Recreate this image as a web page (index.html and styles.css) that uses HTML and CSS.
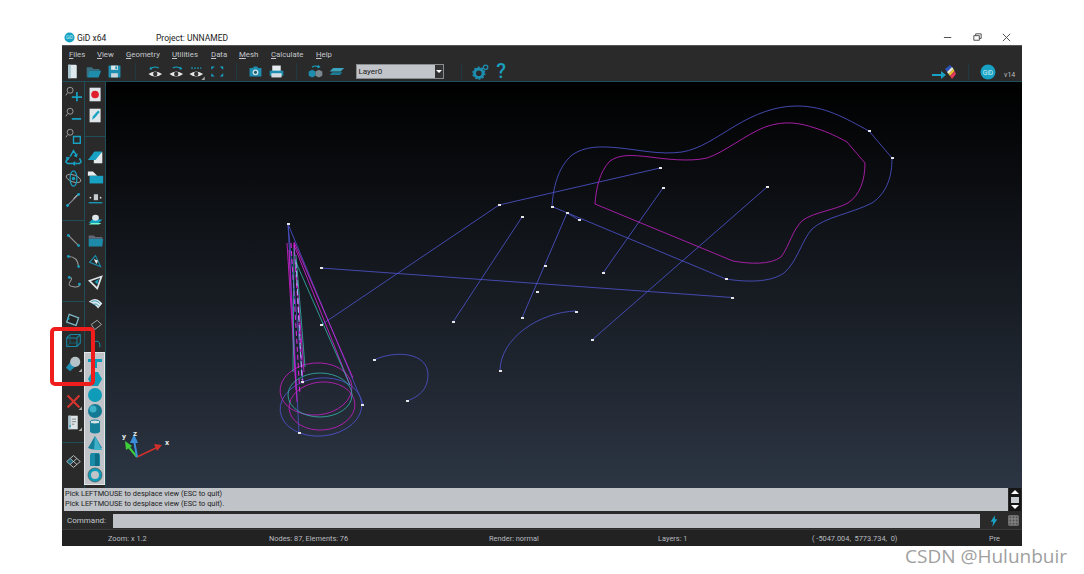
FILE: index.html
```html
<!DOCTYPE html>
<html lang="en">
<head>
<meta charset="utf-8">
<title>GiD x64</title>
<link rel="stylesheet" href="styles.css">
</head>
<body>
<div class="window">
  <header class="titlebar">
    <svg class="logo" viewBox="0 0 12 12"><circle cx="6" cy="6" r="5.5" fill="#17a2c4"/><text x="6" y="8" text-anchor="middle" class="logo-t">GiD</text></svg>
    <span class="app">GiD x64</span>
    <span class="project">Project: UNNAMED</span>
    <div class="winctl">
      <svg viewBox="0 0 12 12"><path d="M1 6h8" stroke="#444" fill="none"/></svg>
      <svg viewBox="0 0 12 12"><path d="M2 4h6v5H2zM4 4V2h6v5H8" stroke="#444" fill="none"/></svg>
      <svg viewBox="0 0 12 12"><path d="M2 2l8 8M10 2l-8 8" stroke="#444" fill="none"/></svg>
    </div>
  </header>
  <nav class="menubar">
    <span class="m1"><u>F</u>iles</span><span class="m2"><u>V</u>iew</span><span class="m3"><u>G</u>eometry</span><span class="m4"><u>U</u>tilities</span><span class="m5"><u>D</u>ata</span><span class="m6"><u>M</u>esh</span><span class="m7"><u>C</u>alculate</span><span class="m8"><u>H</u>elp</span>
  </nav>
  <div class="toolbar">
    <svg class="ti" viewBox="0 0 20 20"><path d="M5 2h9l1 1v15H5z" fill="#dfe8ec"/><path d="M5 2h3v16H5z" fill="#a8c6d0"/></svg>
    <svg class="ti" viewBox="0 0 20 20"><path d="M2 5h6l2 2h7v2H6l-3 8H2z" fill="#3a6f80"/><path d="M5 9h14l-3 8H3z" fill="#1e8dab"/></svg>
    <svg class="ti" viewBox="0 0 20 20"><path d="M3 3h14v14H3z" fill="#1d8db0"/><path d="M6 3h8v5H6z" fill="#dce6ea"/><path d="M6 12h8v5H6z" fill="#c8d4d8"/><path d="M11 4h2v3h-2z" fill="#1d8db0"/></svg>
    <i class="tsep first"></i>
    <svg class="ti nar" viewBox="0 0 20 20"><path d="M4 7q5-4 10-1" stroke="#17a2c4" stroke-width="1.4" fill="none"/><path d="M5 4L3 7l3 1z" fill="#17a2c4"/><path d="M2 13q8-6 16 0q-8 6-16 0z" fill="#e8e8e8"/><circle cx="10" cy="13" r="2.6" fill="#333"/></svg>
    <svg class="ti nar" viewBox="0 0 20 20"><path d="M16 7q-5-4-10-1" stroke="#17a2c4" stroke-width="1.4" fill="none"/><path d="M15 4l2 3-3 1z" fill="#17a2c4"/><path d="M2 13q8-6 16 0q-8 6-16 0z" fill="#e8e8e8"/><circle cx="10" cy="13" r="2.6" fill="#333"/></svg>
    <svg class="ti nar" viewBox="0 0 20 20"><path d="M4 6h12" stroke="#17a2c4" stroke-width="1.4" stroke-dasharray="2 1.5" fill="none"/><path d="M2 13q8-6 16 0q-8 6-16 0z" fill="#e8e8e8"/><circle cx="10" cy="13" r="2.6" fill="#333"/><path d="M20 20v-4l-4 4z" fill="#aaa"/></svg>
    <svg class="ti nar" viewBox="0 0 20 20"><path d="M3 4h4L3 8zM17 4h-4l4 4zM3 16h4l-4-4zM17 16h-4l4-4z" fill="#17a2c4"/></svg>
    <i class="tsep"></i>
    <svg class="ti" viewBox="0 0 20 20"><path d="M3 6h4l1-2h4l1 2h4v10H3z" fill="#1d8db0"/><circle cx="10" cy="11" r="3.4" fill="#cfe0e6"/><circle cx="10" cy="11" r="1.8" fill="#1a5f73"/></svg>
    <svg class="ti" viewBox="0 0 20 20"><path d="M5 3h10v7H5z" fill="#e6ecee"/><path d="M2 9h16v6H2z" fill="#1d8db0"/><path d="M4 12h12v5H4z" fill="#d4dee2"/></svg>
    <i class="tsep"></i>
    <svg class="ti" viewBox="0 0 20 20"><path d="M6 5q4-3 8 0" stroke="#17a2c4" stroke-width="1.3" fill="none"/><path d="M13 2l3 3-4 1z" fill="#17a2c4"/><path d="M2 10l4-2 4 2v5l-4 2-4-2z" fill="#1d8db0"/><path d="M10 10l4-2 4 2v5l-4 2-4-2z" fill="#7b8a90"/></svg>
    <svg class="ti" viewBox="0 0 20 20"><path d="M6 6h13l-4 4H2z" fill="#3aa3bd"/><path d="M5 11h12l-3 3H2z" fill="#1d7d99"/></svg>
    <div class="combo"><span class="combo-t">Layer0</span><span class="combo-b"><b></b></span></div>
    <i class="tsep wide"></i>
    <svg class="ti" viewBox="0 0 20 20"><circle cx="8" cy="12" r="5" fill="none" stroke="#1d8db0" stroke-width="3.400"/><circle cx="8" cy="12" r="7" fill="none" stroke="#1d8db0" stroke-width="1.600" stroke-dasharray="2.200 2.200"/><circle cx="16" cy="5" r="2.600" fill="none" stroke="#1d8db0" stroke-width="1.400"/></svg>
    <span class="help">?</span>
    <span class="spring"></span>
    <svg class="ramp" viewBox="0 0 24 16"><path d="M0 11h11" stroke="#17a2c4" stroke-width="2"/><path d="M9 7l5 4-5 4z" fill="#17a2c4"/><path d="M13 5l5-4 2 2-5 5z" fill="#2a55c0"/><path d="M15 8l5-5 1.500 2-5 5z" fill="#e8e8e0"/><path d="M16.500 10l5-5 1 2-4.500 5z" fill="#e8c62c"/><path d="M18 12l4.500-5 1.500 3-4 5z" fill="#e23a5a"/></svg>
    <i class="tsep right"></i>
    <svg class="gidlogo" viewBox="0 0 16 16"><circle cx="8" cy="8" r="7.500" fill="#17a2c4"/><text x="8" y="10.500" text-anchor="middle" class="gid-t">GiD</text></svg>
    <span class="ver">v14</span>
  </div>
  <div class="stage">
    <aside class="col col-a">
      <svg class="li" viewBox="0 0 20 20"><circle cx="6" cy="5" r="3.500" fill="none" stroke="#aaa"/><path d="M3 8l-2 3" stroke="#aaa"/><path d="M14 7v11M8 13h12" stroke="#17a2c4" stroke-width="2"/></svg>
      <svg class="li" viewBox="0 0 20 20"><circle cx="6" cy="5" r="3.500" fill="none" stroke="#aaa"/><path d="M3 8l-2 3" stroke="#aaa"/><path d="M8 14h11" stroke="#17a2c4" stroke-width="2"/></svg>
      <svg class="li" viewBox="0 0 20 20"><circle cx="6" cy="5" r="3.500" fill="none" stroke="#aaa"/><path d="M3 8l-2 3" stroke="#aaa"/><path d="M10 10h8v8h-8z" fill="none" stroke="#17a2c4" stroke-width="1.600"/></svg>
      <svg class="li" viewBox="0 0 20 20"><path d="M6 9l4-7 3.500 5.500M17 11l2 4-2 2h-5M3 11l-2 4 2 2h6" fill="none" stroke="#17a2c4" stroke-width="1.800"/><path d="M15 5l-1 5-4-2zM12 14v6l-4-3zM1 9l5 1-3 4z" fill="#17a2c4"/></svg>
      <svg class="li" viewBox="0 0 20 20"><ellipse cx="10" cy="10" rx="9" ry="4" fill="none" stroke="#aaa" transform="rotate(20 10 10)"/><ellipse cx="10" cy="10" rx="4" ry="9" fill="none" stroke="#17a2c4" stroke-width="1.400"/><circle cx="10" cy="10" r="2" fill="#17a2c4"/></svg>
      <svg class="li" viewBox="0 0 20 20"><path d="M3 17L16 4" stroke="#889" stroke-width="1.400"/><path d="M10 9l6-6" stroke="#ccc"/><circle cx="3" cy="17" r="1.700" fill="#17a2c4"/><circle cx="16" cy="4" r="1.700" fill="#17a2c4"/></svg>
      <i class="lsep s20"></i>
      <svg class="li" viewBox="0 0 20 20"><path d="M4 4l12 12" stroke="#999" stroke-width="1.200"/><circle cx="4" cy="4" r="1.600" fill="#17a2c4"/><circle cx="16" cy="16" r="1.600" fill="#17a2c4"/></svg>
      <svg class="li" viewBox="0 0 20 20"><path d="M4 4q11 0 12 12" stroke="#999" stroke-width="1.200" fill="none"/><circle cx="4" cy="4" r="1.600" fill="#17a2c4"/><circle cx="16" cy="16" r="1.600" fill="#17a2c4"/></svg>
      <svg class="li" viewBox="0 0 20 20"><path d="M5 4q5 0 1 5t4 6 7-3" stroke="#999" stroke-width="1.200" fill="none"/><circle cx="5" cy="4" r="1.600" fill="#17a2c4"/><circle cx="17" cy="12" r="1.600" fill="#17a2c4"/></svg>
      <i class="lsep s16"></i>
      <svg class="li" viewBox="0 0 20 20"><path d="M5 4l11 4-3 9-11-4z" fill="#222" stroke="#7fb8c6" stroke-width="1.500"/><circle cx="4" cy="9" r="1.400" fill="#17a2c4"/></svg>
      <svg class="li" viewBox="0 0 20 20"><path d="M2 7l4-4h12v10l-4 4H2zM2 7h12v10M14 7l4-4" fill="none" stroke="#178aa6" stroke-width="1.200"/><path d="M6 3v10h12M6 13l-4 4" fill="none" stroke="#116577"/></svg>
      <svg class="li gap" viewBox="0 0 20 20"><path d="M1 15L8 6l6 6-8 7z" fill="#1d8db0"/><circle cx="12" cy="8" r="6" fill="#b5c3c9"/><path d="M20 20v-4l-4 4z" fill="#aaa"/></svg>
      <i class="lsep s17"></i>
      <svg class="li" viewBox="0 0 20 20"><path d="M3 3l14 14M17 3L3 17" stroke="#d8342f" stroke-width="2.400"/><path d="M20 20v-4l-4 4z" fill="#aaa"/></svg>
      <svg class="li" viewBox="0 0 20 20"><path d="M4 2h11v16H4z" fill="#dde4e8"/><path d="M4 2h3v16H4z" fill="#a9c2cc"/><path d="M8 6h5M8 9h5M8 12h3" stroke="#777"/><circle cx="6" cy="14" r="1" fill="#17a2c4"/><path d="M20 20v-4l-4 4z" fill="#aaa"/></svg>
      <i class="lsep s18"></i>
      <svg class="li" viewBox="0 0 20 20"><path d="M2 10l8-7 8 7-8 7z" fill="none" stroke="#d0d4d6"/><path d="M6 6.500l8 7M14 6.500l-8 7" stroke="#d0d4d6"/><path d="M2 10l4 3.500 4-3.500-4-3.500z" fill="#17a2c4" fill-opacity=".5"/></svg>
    </aside>
    <aside class="col col-b">
      <svg class="li" viewBox="0 0 20 20"><path d="M3 2h13v16H3z" fill="#dfe6e9"/><circle cx="9.500" cy="10" r="4.500" fill="#e01f2c"/></svg>
      <svg class="li" viewBox="0 0 20 20"><path d="M3 2h13v16H3z" fill="#dfe6e9"/><path d="M6 15l1-4 6-7 2 2-6 7z" fill="#17a2c4"/></svg>
      <i class="lsep s20"></i>
      <svg class="li" viewBox="0 0 20 20"><path d="M8 5h10v13H8z" fill="#e4e9ec"/><path d="M1 14l8-10h9l-8 10z" fill="#17a2c4"/></svg>
      <svg class="li" viewBox="0 0 20 20"><path d="M1 3h6l5 5H1z" fill="#e8eef0"/><path d="M3 8h16v9H3z" fill="#17a2c4"/></svg>
      <svg class="li" viewBox="0 0 20 20"><path d="M8 5h5v7H8z" fill="#c8ccce"/><path d="M2 15h16" stroke="#17a2c4" stroke-width="1.500"/><circle cx="4" cy="9" r="1" fill="#ddd"/><circle cx="16" cy="9" r="1" fill="#ddd"/></svg>
      <svg class="li" viewBox="0 0 20 20"><path d="M2 14l4-4h12l-4 4z" fill="#17a2c4"/><path d="M2 16l3-2h12l-3 2z" fill="#7fc"/><ellipse cx="10" cy="8" rx="4" ry="3.500" fill="#dfe6e9"/></svg>
      <svg class="li" viewBox="0 0 20 20"><path d="M2 4h6l2 2h8v2H2z" fill="#667"/><path d="M2 8h17l-1 9H2z" fill="#1c8aa8"/></svg>
      <svg class="li" viewBox="0 0 20 20"><path d="M3 11l7-8 6 13z" fill="none" stroke="#1c8aa8" stroke-width="1.400"/><path d="M8 7l5 2-2 4z" fill="#e8eef0"/></svg>
      <svg class="li" viewBox="0 0 20 20"><path d="M3 8l14-5-5 14z" fill="none" stroke="#dfe6e9" stroke-width="2"/><path d="M9 9l5-3-2 6z" fill="#17a2c4"/></svg>
      <svg class="li" viewBox="0 0 20 20"><path d="M2 8q7-6 13-1l3 3-5 6q-3-5-11-8z" fill="#dfe8ec"/><path d="M5 8q6-3 10 2M7 11q4-2 7 2" stroke="#1d8db0" fill="none"/></svg>
      <svg class="li" viewBox="0 0 20 20"><path d="M5 10l7-5 5 5-8 6z" fill="none" stroke="#bbb"/></svg>
      <svg class="li" viewBox="0 0 20 20"><path d="M6 12q0-7 5-7t4 7" fill="none" stroke="#17a2c4"/></svg>
    </aside>
    <main class="view">
      <svg class="scene" viewBox="106 82 916 406">
        <defs><linearGradient id="sky" x1="0" y1="0" x2="0" y2="1"><stop offset="0" stop-color="#000"/><stop offset="1" stop-color="#2c3543"/></linearGradient></defs>
        <rect x="106" y="82" width="916" height="406" fill="url(#sky)"/>
        <g class="blue">
          <path d="M552 206.500C553 190 557 168 572 155C585 146 600 146 620 148C640 150 660 155 682 152C700 149 715 138 735 126C755 114 775 106 797 106C825 106 845 118 869 131L892 158C892 175 888 192 872 203C850 214 825 217 812 229C802 240 797 262 784 273C770 283 745 282 726 279Z"/>
          <path d="M321 325L499 205L660 168"/>
          <path d="M321 268L732 297.500"/>
          <path d="M522 217L453 322M663 188L603 273M767 187L592 340M567 213L522 318M567 213L579 220"/>
          <path d="M576 311C540 312 500 338 500 371"/>
          <path d="M374 360C395 350 428 352 428 375C428 390 418 397 407 401"/>
          <ellipse cx="321" cy="407" rx="41" ry="29" transform="rotate(-6 321 407)"/>
          <path d="M288 224L363 404M288 224L299 433M288 224L303 382"/>
        </g>
        <g class="magenta">
          <path d="M595 204C596 190 599 172 610 161C620 154 632 155 650 157C665 159 690 162 707 158C725 152 745 135 765 127C785 120 800 123 815 128C828 132 838 137 847 142L865 163C865 180 860 195 848 203C835 210 815 212 803 220C792 230 790 245 781 257C770 265 750 264 733 261Z"/>
          <ellipse cx="316" cy="389" rx="36" ry="26" transform="rotate(-5 316 389)"/>
          <ellipse cx="322" cy="406" rx="33" ry="24" transform="rotate(-5 322 406)"/>
          <path class="hot" d="M294 242L353 378M294 245L350 385M287 243L297 402M294 245L304 372M289 250L296 390"/>
          <path class="dash" d="M291 243L300 395M294 243L303 385"/>
        </g>
        <g class="teal">
          <ellipse cx="320" cy="395" rx="32" ry="22"/>
          <path d="M295 260L350 385M294 248L293 372M296 255L305 367"/>
          <path class="cyan" d="M296 262L302 380"/>
        </g>
        <g class="nodes">
          <path d="M287 223h3v2h-3zM320 267h3v2h-3zM320 324h3v2h-3zM373 359h3v2h-3zM406 400h3v2h-3zM301 381h3v2h-3zM361 404h3v2h-3zM298 432h3v2h-3zM498 204h3v2h-3zM659 167h3v2h-3zM551 206h3v2h-3zM566 212h3v2h-3zM578 219h3v2h-3zM521 216h3v2h-3zM662 187h3v2h-3zM766 186h3v2h-3zM868 130h3v2h-3zM891 157h3v2h-3zM725 278h3v2h-3zM731 297h3v2h-3zM452 321h3v2h-3zM521 317h3v2h-3zM544 265h3v2h-3zM536 291h3v2h-3zM602 272h3v2h-3zM591 339h3v2h-3zM575 311h3v2h-3zM499 370h3v2h-3z"/>
        </g>
        <g class="axes">
          <path d="M137 457L158 447" class="ax-x"/><path d="M162 445l-8-1 3 7z" fill="#d0302c"/>
          <path d="M137 457L127 445" class="ax-y"/><path d="M125 441l7 5-6 4z" fill="#3ecf3a"/>
          <path d="M137 457L134 440" class="ax-z"/><path d="M134 434l4 9h-8z" fill="#3a8fd8"/>
          <text x="165" y="445">x</text><text x="122" y="439">y</text><text x="133" y="436">z</text>
        </g>
      </svg>
      <div class="flyout">
        <svg class="fi" viewBox="0 0 16 16"><path d="M1 4h14v3H10v6H6V7H1z" fill="#0e9cb8"/></svg>
        <svg class="fi" viewBox="0 0 16 16"><path d="M1 8l4-7h6l4 7-4 7H5z" fill="#0e9cb8"/></svg>
        <svg class="fi" viewBox="0 0 16 16"><circle cx="8" cy="8" r="7" fill="#0e9cb8"/></svg>
        <svg class="fi" viewBox="0 0 16 16"><circle cx="8" cy="8" r="7" fill="#147a94"/><circle cx="6" cy="6" r="3.500" fill="#3eb0c8"/></svg>
        <svg class="fi" viewBox="0 0 16 16"><path d="M3 3h10v10q-5 3-10 0z" fill="#167f99"/><ellipse cx="8" cy="3" rx="5" ry="2" fill="#d6e4e8" stroke="#167f99"/></svg>
        <svg class="fi" viewBox="0 0 16 16"><path d="M8 1L1 13q7 3 14 0z" fill="#137f9a"/><path d="M8 1l-1 14h8z" fill="#3eb0c8"/></svg>
        <svg class="fi" viewBox="0 0 16 16"><path d="M4 2h8l1 2v11H3V4z" fill="#1a8ba7"/><path d="M8 3h4v12H8z" fill="#0e6c85"/></svg>
        <svg class="fi" viewBox="0 0 16 16"><circle cx="8" cy="8" r="5.500" fill="none" stroke="#0e9cb8" stroke-width="3"/><circle cx="8" cy="8" r="7" fill="none" stroke="#444" stroke-width=".6"/></svg>
      </div>
    </main>
    <div class="highlight"></div>
  </div>
  <section class="log">
    <div class="log-text">
      <p>Pick LEFTMOUSE to desplace view (ESC to quit)</p>
      <p>Pick LEFTMOUSE to desplace view (ESC to quit).</p>
    </div>
    <div class="scroll"><b class="up"></b><b class="thumb"></b><b class="down"></b></div>
  </section>
  <section class="command">
    <label class="cmd-l">Command:</label>
    <div class="cmd-i"></div>
    <svg class="bolt" viewBox="0 0 12 14"><path d="M7 0L2 8h3l-1 6 6-9H7z" fill="#17a2c4"/></svg>
    <svg class="tgrid" viewBox="0 0 14 14"><path d="M1 1h12v12H1z" fill="#555" stroke="#999"/><path d="M5 1v12M9 1v12M1 5h12M1 9h12" stroke="#999"/></svg>
  </section>
  <footer class="status">
    <span class="s-zoom">Zoom: x 1.2</span>
    <span class="s-nodes">Nodes: 87, Elements: 76</span>
    <span class="s-render">Render: normal</span>
    <span class="s-layers">Layers: 1</span>
    <span class="s-coord">( -5047.004,  5773.734,  0)</span>
    <span class="s-pre">Pre</span>
  </footer>
</div>
<div class="watermark">CSDN @Hulunbuir</div>
</body>
</html>
```
FILE: styles.css
```css
* { box-sizing: border-box; }
html, body { margin: 0; height: 574px; overflow: hidden; background: #fff; }
body { position: relative; padding: 30px 0 0 62px; font-family: Roboto, "Open Sans", sans-serif; font-size: 8px; }
p { margin: 0; }
.window { width: 960px; height: 516px; display: flex; flex-direction: column; }

.titlebar { height: 15px; display: flex; align-items: center; color: #222; background: #fff; padding-left: 2px; font-size: 8.5px; }
.logo { width: 11px; height: 11px; margin-right: 2px; }
.logo-t { font-size: 5px; fill: #cfeef5; }
.app { width: 79px; }
.project { flex: none; }
.winctl { margin-left: auto; display: flex; gap: 18px; margin-right: 10px; }
.winctl svg { width: 11px; height: 11px; display: block; }

.menubar { height: 17px; background: #2a2a2a; border-top: 1px solid #555; color: #c4c8cc; display: flex; align-items: center; font-size: 7.800px; position: relative; }
.menubar span { display: block; }
.menubar u { text-decoration: underline; }
.m1 { margin-left: 7px; width: 28px; }
.m2 { width: 29px; }
.m3 { width: 46px; }
.m4 { width: 39px; }
.m5 { width: 28px; }
.m6 { width: 32px; }
.m7 { width: 45px; }

.toolbar { height: 20px; background: #2a2a2a; border-bottom: 1px solid #1f4d58; display: flex; align-items: center; }
.ti { width: 21px; height: 17px; flex: none; }
.ti.nar { width: 20.500px; }
.tsep { width: 1px; height: 17px; background: #1d3a42; margin: 0 8.500px; flex: none; }
.tsep.first { margin: 0 9.500px; }
.tsep.wide { margin: 0 8px 0 17px; }
.tsep.right { margin: 0 11px 0 12px; }
.combo { flex: none; margin-left: 8.500px; width: 88px; height: 15px; background: #c1c4c9; border: 1px solid #8a8d90; display: flex; align-items: center; color: #222; font-size: 8px; padding-left: 2px; }
.combo-t { flex: 1; }
.combo-b { width: 8px; height: 13px; background: #333; display: flex; align-items: center; justify-content: center; }
.combo-b b { width: 0; height: 0; border: 3px solid transparent; border-top-color: #fff; border-bottom: 0; }
.help { width: 21px; flex: none; text-align: center; color: #1b9dbd; font-size: 20px; line-height: 19px; font-weight: 500; }
.spring { flex: 1; }
.ramp { width: 24px; height: 16px; flex: none; }
.gidlogo { width: 16px; height: 16px; flex: none; }
.gid-t { font-size: 6.500px; fill: #d5f1f7; }
.ver { color: #bdbdbd; font-size: 7px; width: 12px; margin: 6px 6px 0 8px; flex: none; }

.stage { position: relative; height: 406px; display: flex; background: #2a2a2a; }
.col { flex: none; display: flex; flex-direction: column; align-items: center; padding-top: 2px; }
.col-a { width: 23px; border-right: 1px solid #1f4d58; }
.col-b { width: 21px; border-right: 1px solid #1f4d58; }
.li { width: 17px; height: 21px; flex: none; }
.li.gap { margin-top: 2px; }
.lsep { display: block; align-self: stretch; position: relative; flex: none; }
.lsep::after { content: ""; position: absolute; left: 0; right: 0; top: 50%; height: 1px; background: #1f4d58; }
.s20 { height: 20px; }
.s16 { height: 16px; }
.s17 { height: 17px; }
.s18 { height: 18px; }
.view { flex: 1; position: relative; min-width: 0; overflow: visible; }
.scene { display: block; width: 916px; height: 406px; }
.blue path, .blue ellipse { fill: none; stroke: #4a4fbf; stroke-width: .9; }
.magenta path, .magenta ellipse { fill: none; stroke: #b31fb3; stroke-width: .9; }
.magenta .hot { stroke: #c920cc; stroke-width: .9; }
.magenta .dash { stroke: #e22ae8; stroke-dasharray: 5 3; stroke-width: 1; }
.teal path, .teal ellipse { fill: none; stroke: #35b5ad; stroke-width: .8; }
.teal .cyan { stroke: #9fd8ff; stroke-dasharray: 6 3; }
.nodes path { fill: #e6e6ea; }
.ax-x { stroke: #d0302c; stroke-width: 1.500; }
.ax-y { stroke: #3ecf3a; stroke-width: 2; }
.ax-z { stroke: #3a8fd8; stroke-width: 2; }
.axes text { fill: #e8e8e8; font-size: 8px; font-weight: 700; }

.flyout { position: absolute; left: -22px; top: 270px; width: 21px; height: 133px; background: #c0c3c8; border: 1px solid #e4e6e8; display: flex; flex-direction: column; justify-content: space-between; align-items: center; padding: 2px 0; }
.fi { width: 16px; height: 16px; flex: none; }
.highlight { position: absolute; left: -12px; top: 245px; width: 45px; height: 59px; border: 4px solid #f01d1d; border-radius: 5px; }

.log { height: 25px; background: #2a2a2a; display: flex; padding: 0 1px 2px 2px; }
.log-text { flex: 1; background: #c0c3c8; color: #1c1c1c; font-size: 7.400px; line-height: 10px; padding: 1px 1px; }
.scroll { width: 12px; margin-left: 1px; background: #161616; display: flex; flex-direction: column; align-items: center; justify-content: space-between; padding: 2px 0; }
.up { width: 0; height: 0; border: 4px solid transparent; border-bottom-color: #fff; border-top: 0; }
.down { width: 0; height: 0; border: 4px solid transparent; border-top-color: #fff; border-bottom: 0; }
.thumb { width: 8px; height: 6px; background: #c8cbd0; }

.command { height: 17px; background: #2a2a2a; border-bottom: 1px solid #3a3a3a; display: flex; align-items: center; color: #c4c8cc; font-size: 8px; padding-bottom: 1px; }
.cmd-l { width: 51px; padding-left: 5px; flex: none; }
.cmd-i { width: 867px; height: 14px; background: #c0c3c8; flex: none; }
.bolt { width: 10px; height: 12px; margin-left: 9px; flex: none; }
.tgrid { width: 11px; height: 11px; margin-left: 9px; flex: none; }

.status { height: 16px; background: #222; color: #b8bcc0; font-size: 7.400px; display: flex; align-items: center; padding-left: 46px; white-space: pre; }
.s-zoom { width: 161px; flex: none; }
.s-nodes { width: 220px; flex: none; }
.s-render { width: 169px; flex: none; }
.s-layers { width: 154px; flex: none; }
.s-coord { width: 177px; flex: none; }

.watermark { position: absolute; left: 905px; top: 545px; font-size: 19px; color: #a0a0a0; white-space: nowrap; line-height: 22px; font-family: "Open Sans", sans-serif; }
```
